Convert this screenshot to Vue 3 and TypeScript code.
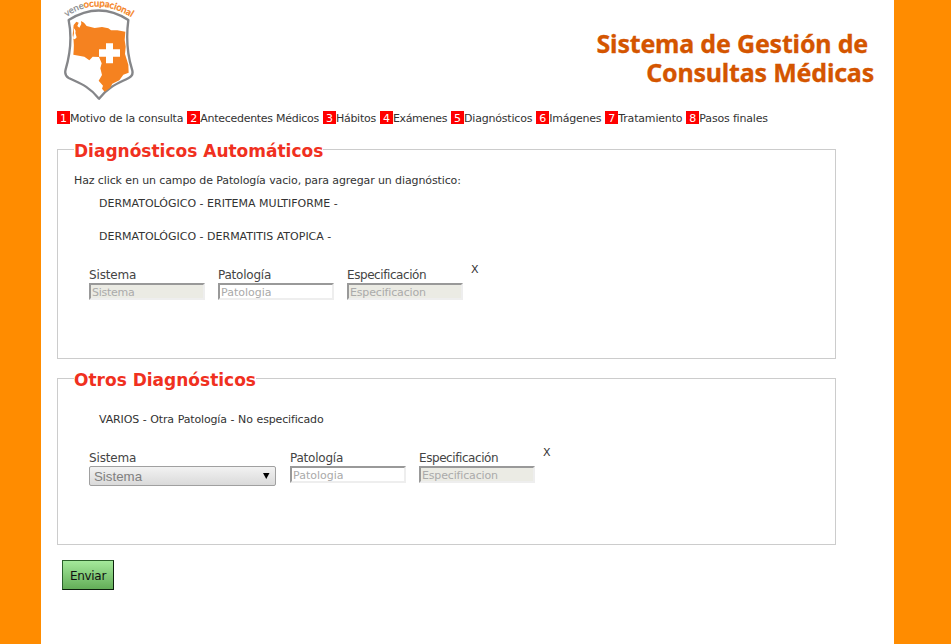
<script setup lang="ts">
interface Step { n: number; label: string; spacing: number }
interface Field { label: string; hint: string; kind: 'off' | 'text' | 'select'; tone: string }

const steps: Step[] = [
  { n: 1, label: 'Motivo de la consulta', spacing: -0.2 },
  { n: 2, label: 'Antecedentes Médicos', spacing: -0.28 },
  { n: 3, label: 'Hábitos', spacing: -0.25 },
  { n: 4, label: 'Exámenes', spacing: -0.38 },
  { n: 5, label: 'Diagnósticos', spacing: -0.2 },
  { n: 6, label: 'Imágenes', spacing: -0.23 },
  { n: 7, label: 'Tratamiento', spacing: -0.18 },
  { n: 8, label: 'Pasos finales', spacing: -0.17 },
]
const autoItems: string[] = ['DERMATOLÓGICO - ERITEMA MULTIFORME -', 'DERMATOLÓGICO - DERMATITIS ATOPICA -']
const autoFields: Field[] = [
  { label: 'Sistema', hint: 'Sistema', kind: 'off', tone: 'short' },
  { label: 'Patología', hint: 'Patologia', kind: 'text', tone: 'mid' },
  { label: 'Especificación', hint: 'Especificacion', kind: 'off', tone: 'long' },
]
const otherFields: Field[] = [
  { label: 'Sistema', hint: 'Sistema', kind: 'select', tone: 'short' },
  { label: 'Patología', hint: 'Patologia', kind: 'text', tone: 'mid' },
  { label: 'Especificación', hint: 'Especificacion', kind: 'off', tone: 'long' },
]
</script>

<template>
  <div class="page">
    <header class="header">
      <svg class="logo" width="78" height="104" viewBox="6 0 234 312">
        <defs><path id="arc" d="M20 51 Q112 -16 224 58 L250 78" /></defs>
        <path d="M26 60 Q117 3 205 60 C199 105 198 150 216 208 Q222 226 206 234 C180 248 149 256 117 296 C85 256 54 248 26 234 Q12 226 17 208 C34 150 35 105 26 60 Z" fill="#fff" stroke="#858689" stroke-width="7" stroke-linejoin="round" />
        <path d="M41 75 L49 65 L56 68 L52 78 L58 83 L64 72 L63 63 L72 68 L80 78 L104 84 L126 81 L145 85 L153 91 L172 91 L196 95 L194 120 L197 140 L195 162 L205 194 L206 218 L190 224 L178 241 L157 251 L150 264 L134 275 L126 266 L129 257 L116 242 L126 225 L121 205 L125 190 L117 171 L98 170 L88 181 L73 170 L40 164 C42 145 43 127 38 105 Z" fill="#f58220" />
        <path d="M41 84 Q49 91 46 99 L50 112 Q43 122 39 115 L42 100 Z" fill="#fff" />
        <path d="M138 130h21v18h21v22h-21v20h-21v-20h-21v-22h21z" fill="#fff" />
        <text class="brand"><textPath href="#arc"><tspan class="vene">vene</tspan><tspan class="ocup">ocupacional</tspan></textPath></text>
      </svg>
      <h1><span class="first">Sistema de Gestión de</span><span class="second">Consultas Médicas</span></h1>
    </header>
    <nav class="steps">
      <span v-for="s in steps" :key="s.n" class="step"><b>{{ s.n }}</b><span :style="{ letterSpacing: s.spacing + 'px' }">{{ s.label }}</span></span>
    </nav>
    <fieldset class="auto">
      <legend>Diagnósticos Automáticos</legend>
      <p class="intro">Haz click en un campo de Patología vacio, para agregar un diagnóstico:</p>
      <ul class="items"><li v-for="item in autoItems" :key="item">{{ item }}</li></ul>
      <div class="fields">
        <label v-for="f in autoFields" :key="f.label" :class="f.tone"><span>{{ f.label }}</span><input :placeholder="f.hint" :disabled="f.kind === 'off'" /></label>
        <a class="remove">X</a>
      </div>
    </fieldset>
    <fieldset class="other">
      <legend>Otros Diagnósticos</legend>
      <ul class="items"><li>VARIOS - Otra Patología - No especificado</li></ul>
      <div class="fields">
        <label v-for="f in otherFields" :key="f.label" :class="f.tone"><span>{{ f.label }}</span>
          <span v-if="f.kind === 'select'" class="select"><i>{{ f.hint }}</i><svg width="8" height="8" viewBox="0 0 8 8"><path d="M1 1h6.500L4.250 7z" fill="#000" /></svg></span>
          <input v-else :placeholder="f.hint" :disabled="f.kind === 'off'" />
        </label>
        <a class="remove">X</a>
      </div>
    </fieldset>
    <button type="button">Enviar</button>
  </div>
</template>

<style>
body { background: #ff8c00; overflow: hidden; }
</style>
<style scoped>
.page { box-sizing: border-box; width: 853px; height: 644px; margin-left: 41px; padding-left: 16px; background: #fff; color: #333; font: 11px/14px "DejaVu Sans", Verdana, sans-serif; }
.header { display: flex; justify-content: space-between; height: 111px; }
.logo { margin-left: 5px; flex: none; overflow: visible; }
.brand { font: 28px Lato, sans-serif; letter-spacing: 0.1px; }
.vene { fill: #858689; stroke: #858689; stroke-width: 0.6px; }
.ocup { fill: #f58220; stroke: #f58220; stroke-width: 1.2px; }
h1 { display: flex; flex-direction: column; align-items: flex-end; margin: 29px 20px 0 0; color: #d45500; font: bold 25px/29px "Noto Sans", sans-serif; letter-spacing: -0.2px; white-space: nowrap; -webkit-text-stroke: 0.3px #d45500; }
.first { margin-right: 6px; }
.steps { display: flex; gap: 4px; height: 13px; line-height: 15px; white-space: nowrap; }
.step { display: flex; }
.step b { width: 13px; height: 13px; background: red; color: #fff; font-weight: normal; text-align: center; }
fieldset { box-sizing: border-box; width: 779px; margin: 0; padding: 0 16px; border: 1px solid #ccc; }
.auto { height: 219px; margin-top: 16px; }
.other { height: 176px; margin-top: 10px; }
legend { height: 18px; padding: 0; color: #f03020; font-size: 17px; font-weight: bold; line-height: 23px; white-space: nowrap; }
.intro { margin: 16px 0 0; height: 14px; letter-spacing: -0.11px; }
.items { display: grid; gap: 19px; margin: 9px 0 0 25px; padding: 0; list-style: none; }
.other .items { margin-top: 26px; letter-spacing: -0.15px; word-spacing: 0.4px; }
.items li { height: 14px; }
.fields { display: flex; gap: 13px; margin: 24px 0 0 15px; }
label { display: flex; flex-direction: column; font-size: 12px; line-height: 15px; }
label > span:first-child { height: 15px; color: #444; }
.short > span:first-child { letter-spacing: -0.15px; }
.mid > span:first-child { letter-spacing: -0.22px; }
.long > span:first-child { letter-spacing: -0.43px; }
input { box-sizing: border-box; width: 116px; height: 17px; padding: 1px 1px 0; border: 2px solid; border-color: #999 #eee #eee #999; background: #fff; font: 11px "DejaVu Sans", sans-serif; }
input:disabled { background: #ebebe4; }
input::placeholder { color: #aaa; opacity: 1; }
.short input { letter-spacing: -0.25px; }
.long input { letter-spacing: -0.16px; }
.remove { margin: -5px 0 0 -5px; height: 14px; }
.select { box-sizing: border-box; display: flex; align-items: center; justify-content: space-between; width: 187px; height: 20px; margin-right: 1px; padding: 0 5px 0 4px; border: 1px solid #a0a0a0; border-radius: 2px; background: linear-gradient(#f2f2f2, #dadada); color: #808080; }
.select i { font: 13.300px/19px "Liberation Sans", sans-serif; }
button { display: block; width: 52px; height: 30px; margin: 15px 0 0 5px; padding: 1px 0 0; border: 1px solid; border-color: #2a602a #0d200d #0d200d #2a602a; background: linear-gradient(#a4e99b, #63ad58); color: #111; font: 12px "DejaVu Sans", sans-serif; letter-spacing: -0.3px; }
</style>
